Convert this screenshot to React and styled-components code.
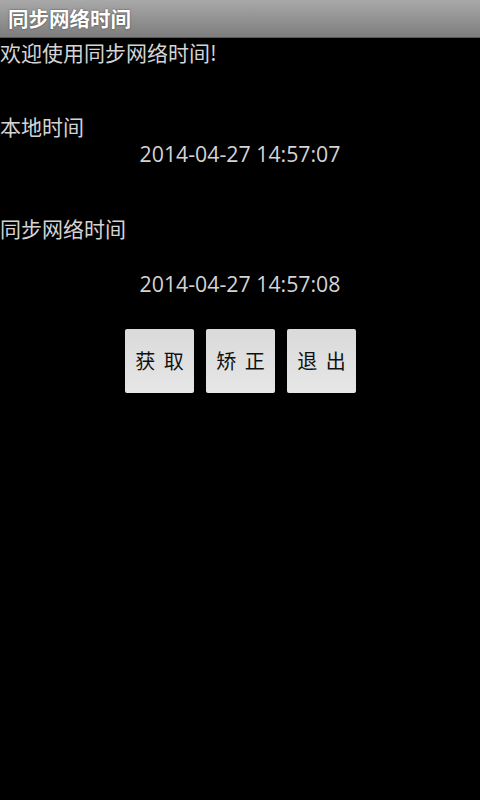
import React from 'react';
import styled, { createGlobalStyle } from 'styled-components';

const GlobalStyle = createGlobalStyle`
  html, body {
    margin: 0;
    padding: 0;
    background: #000;
  }
  body {
    font-family: "Open Sans", "Noto Sans CJK SC", sans-serif;
  }
`;

const Screen = styled.div`
  width: 480px;
  height: 800px;
  background: #000;
  display: flex;
  flex-direction: column;
`;

const TitleBar = styled.div`
  height: 38px;
  display: flex;
  align-items: center;
  padding-left: 8px;
  background: linear-gradient(#a9a9a9, #7d7d7d);
  border-bottom: 1px solid #5a5a5a;
  box-sizing: border-box;
`;

const Title = styled.h1`
  margin: 0 0 1px;
  font-family: "Noto Sans CJK SC", sans-serif;
  font-size: 20.5px;
  font-weight: bold;
  color: #fff;
  text-shadow: 0 0 2px rgba(0, 0, 0, 0.6);
`;

const Label = styled.div`
  font-family: "Noto Sans CJK SC", sans-serif;
  font-size: 21px;
  line-height: 28px;
  color: #d4d4d4;
  margin-top: ${p => p.$top || 0}px;
`;

const Time = styled.div`
  font-family: "Open Sans", sans-serif;
  font-size: 21.3px;
  line-height: 28px;
  color: #d4d4d4;
  text-align: center;
  margin-top: ${p => p.$top || 0}px;
`;

const ButtonRow = styled.div`
  display: flex;
  justify-content: center;
  gap: 12px;
  margin-top: 31px;
  padding-left: 1px;
`;

const Button = styled.button`
  width: 69px;
  height: 64px;
  border: none;
  border-radius: 2px;
  background: linear-gradient(#dadada, #e6e6e6);
  font-family: "Noto Sans CJK SC", sans-serif;
  font-size: 20px;
  color: #111;
  padding: 0 0 2px;
  word-spacing: 4px;
  white-space: pre;
`;

export default function App() {
  return (
    <Screen>
      <GlobalStyle />
      <TitleBar>
        <Title>同步网络时间</Title>
      </TitleBar>
      <Label>欢迎使用同步网络时间!</Label>
      <Label $top={46}>本地时间</Label>
      <Time>2014-04-27 14:57:07</Time>
      <Label $top={46}>同步网络时间</Label>
      <Time $top={28}>2014-04-27 14:57:08</Time>
      <ButtonRow>
        <Button>获 取</Button>
        <Button>矫 正</Button>
        <Button>退 出</Button>
      </ButtonRow>
    </Screen>
  );
}
